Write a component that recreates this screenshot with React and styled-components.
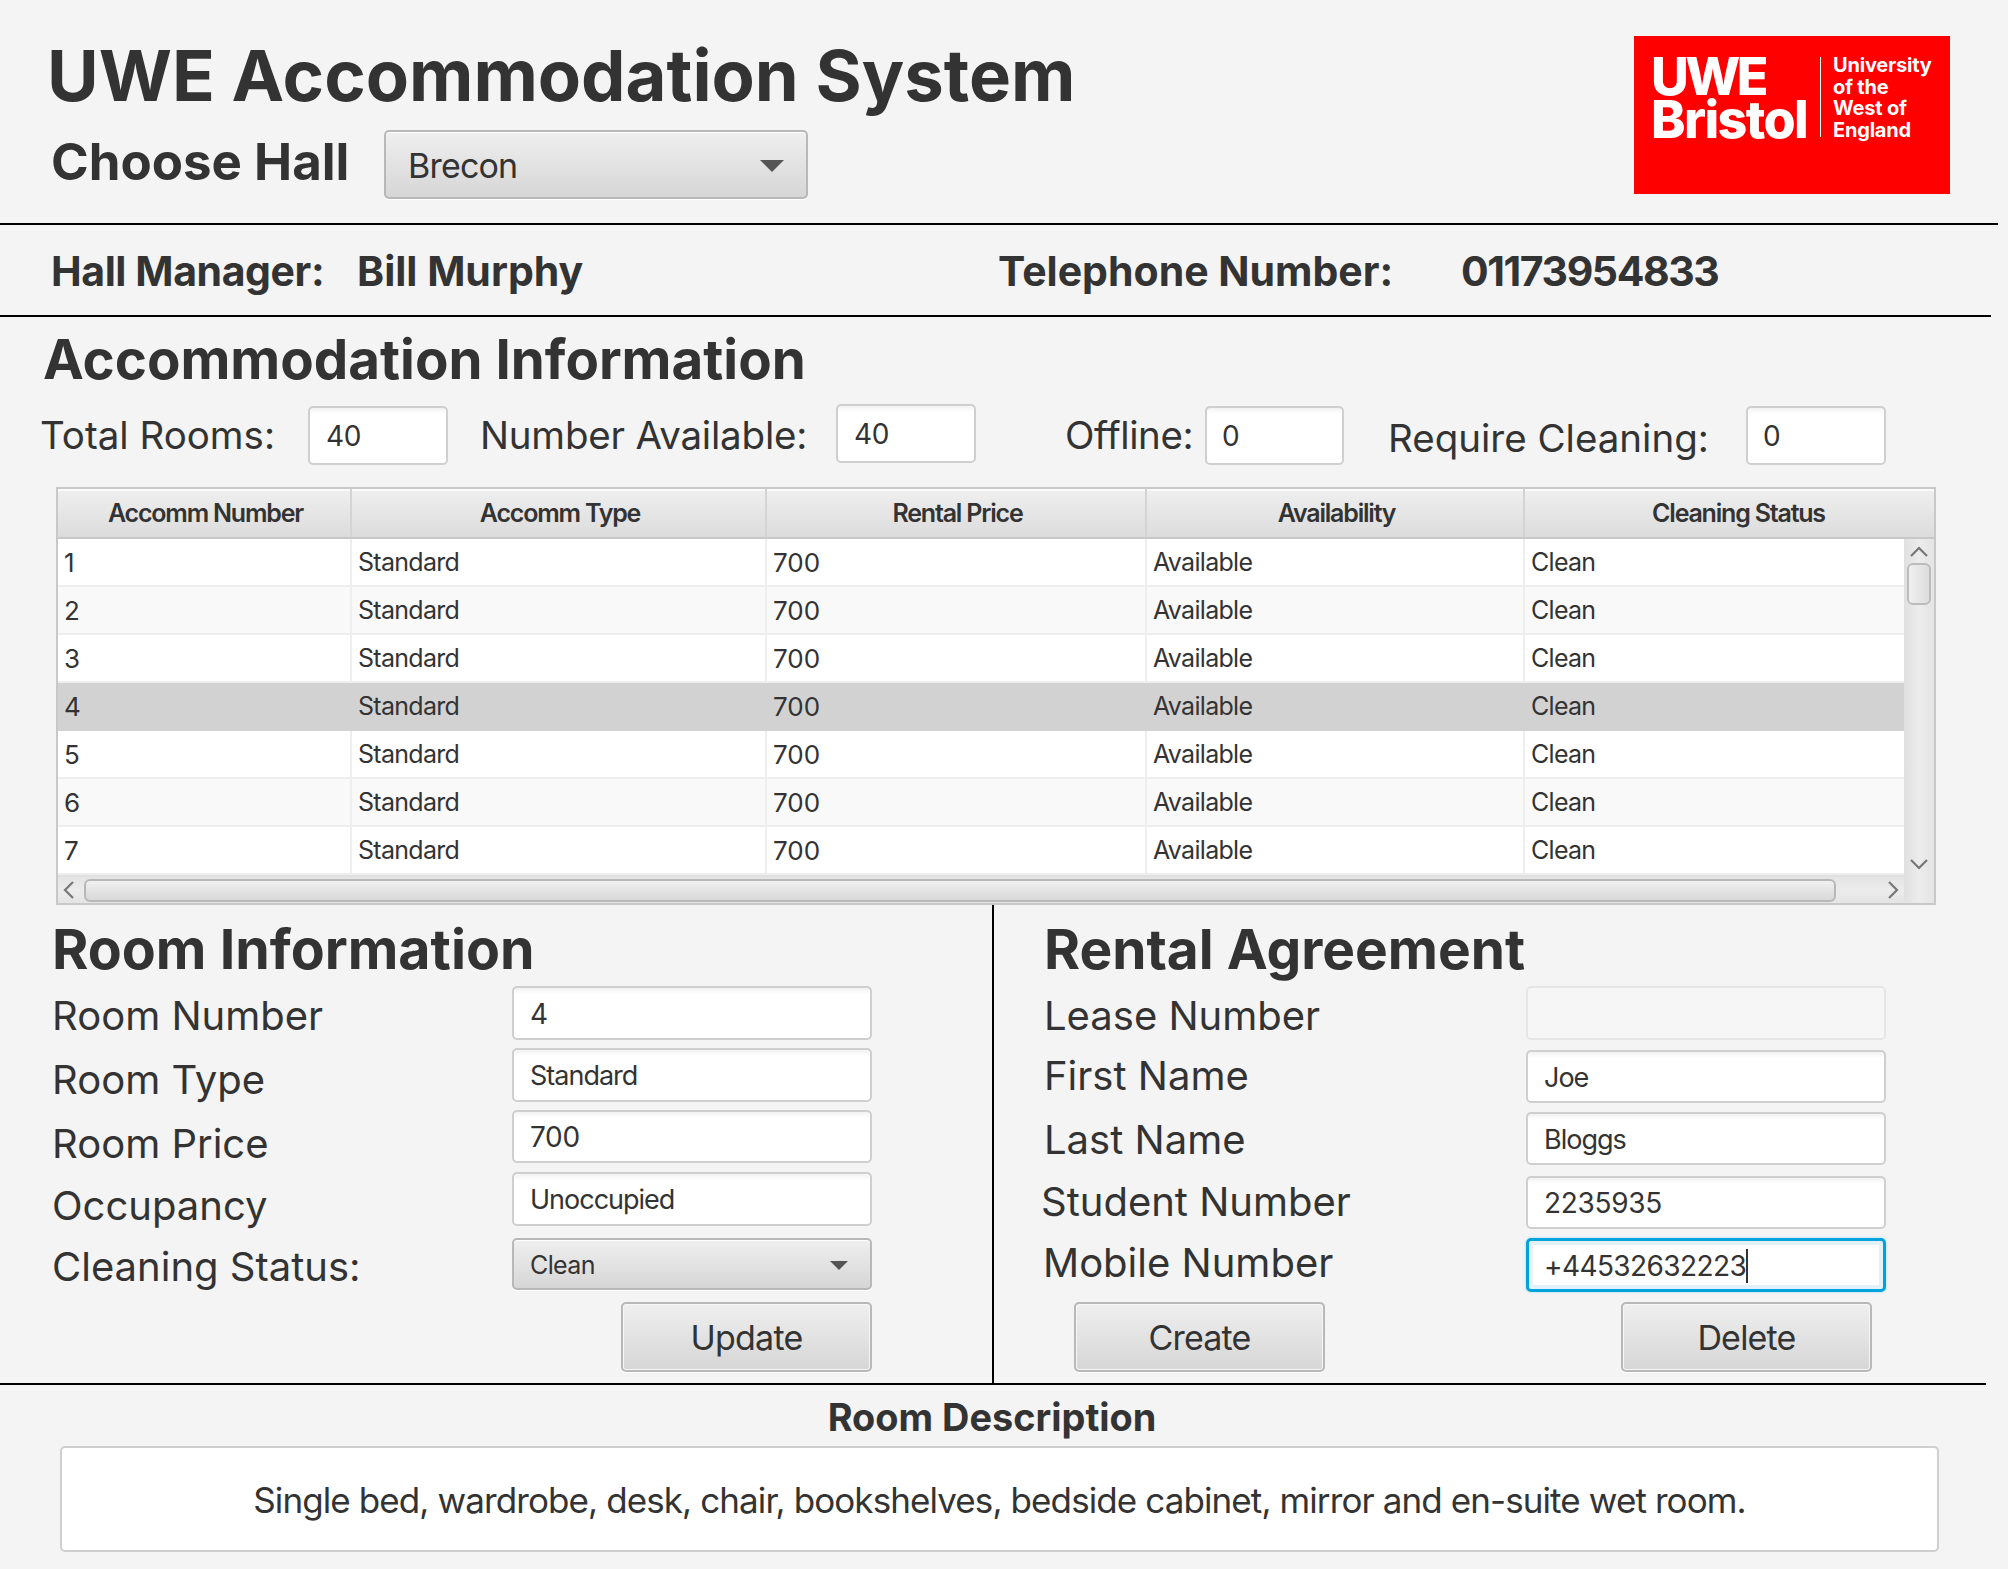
import styled, { createGlobalStyle } from "styled-components";

const GlobalStyle = createGlobalStyle`
  html, body { margin: 0; padding: 0; background: #f4f4f4; }
  * { box-sizing: border-box; }
`;

const Page = styled.div`
  width: 2008px;
  height: 1569px;
  overflow: hidden;
  background: #f4f4f4;
  color: #333;
  font-family: Inter, "Liberation Sans", sans-serif;
`;

const Rule = styled.div`
  width: ${(p) => p.$width}px;
  height: 2px;
  background: #000;
`;

const Header = styled.header`
  height: 223px;
  display: flex;
  justify-content: space-between;
`;

const HeaderLeft = styled.div`
  padding: 36px 0 0 47px;
`;

const Title = styled.h1`
  margin: 0;
  font-size: 70.6px;
  line-height: 80px;
  font-weight: 700;
`;

const ChooseRow = styled.div`
  display: flex;
  align-items: center;
  margin: 14px 0 0 4px;
`;

const ChooseLabel = styled.div`
  width: 333px;
  padding-bottom: 6px;
  font-size: 51px;
  font-weight: 700;
`;

const gradient = "linear-gradient(#efefef, #d6d6d6)";

const Select = styled.div`
  display: flex;
  align-items: center;
  justify-content: space-between;
  width: ${(p) => p.$width}px;
  height: ${(p) => p.$height}px;
  margin-top: ${(p) => p.$top || 0}px;
  padding: 2px 22px 0 ${(p) => p.$pad}px;
  font-size: ${(p) => p.$size}px;
  letter-spacing: ${(p) => p.$spacing}px;
  background: ${gradient};
  border: 2px solid #b8b8b8;
  border-radius: 5px;
  box-shadow: inset 0 1px 0 #fff, 0 1px 0 #fff;
`;

const Logo = styled.div`
  width: 316px;
  height: 158px;
  margin: 36px 58px 0 0;
  padding: 21px 0 0 17px;
  background: #f00;
  color: #fff;
  display: flex;
  align-items: flex-start;
`;

const LogoMark = styled.div`
  width: 169px;
  margin-top: -2px;
  font-size: 52px;
  line-height: 43px;
  font-weight: 800;
  letter-spacing: -1.6px;
`;

const LogoTight = styled.span`
  letter-spacing: -3.6px;
`;

const LogoDivider = styled.div`
  width: 1px;
  height: 80px;
  background: #fff;
  margin-right: 12px;
`;

const LogoText = styled.div`
  font-size: 20px;
  line-height: 21.6px;
  font-weight: 700;
  letter-spacing: -0.2px;
  margin-top: -2px;
`;

const ManagerRow = styled.div`
  height: 90px;
  padding: 2px 0 0 51px;
  display: grid;
  grid-template-columns: 306px 641px 463px auto;
  align-items: center;
  font-size: 41px;
  font-weight: 700;
`;

const ManagerText = styled.div`
  letter-spacing: ${(p) => p.$spacing || 0}px;
`;

const SectionHeading = styled.h2`
  margin: 0;
  font-size: ${(p) => p.$size}px;
  line-height: 60px;
  font-weight: 700;
`;

const AccommSection = styled.section`
  padding: 12px 0 0 43px;
`;

const InfoRow = styled.div`
  display: flex;
  align-items: center;
  height: 59px;
  margin: 17px 0 0 -3px;
  font-size: 38.5px;
`;

const InfoLabel = styled.div`
  width: ${(p) => p.$width}px;
  margin-left: ${(p) => p.$gap || 0}px;
  letter-spacing: ${(p) => p.$spacing || 0}px;
  white-space: nowrap;
  position: relative;
  top: ${(p) => p.$drop || -1}px;
`;

const Field = styled.div`
  display: flex;
  align-items: center;
  flex: none;
  width: ${(p) => p.$width || 360}px;
  height: ${(p) => p.$height || 54}px;
  margin-top: ${(p) => p.$top || 0}px;
  padding: 1px 0 0 ${(p) => p.$pad || 16}px;
  font-size: ${(p) => (p.$words ? 27 : 28)}px;
  letter-spacing: ${(p) => (p.$words ? -1 : -0.3)}px;
  background: ${(p) =>
    p.$disabled ? "#f6f6f6" : "linear-gradient(#f2f2f2, #fff 6px)"};
  border: 2px solid ${(p) => (p.$disabled ? "#e6e6e6" : "#cfcfcf")};
  border-radius: 5px;
`;

const FocusField = styled(Field)`
  background: #fff;
  border: 3px solid #00a3dc;
  padding-left: 15px;
  letter-spacing: -0.6px;
  box-shadow: inset 0 0 0 4px #e2f1fa, 0 0 2px 1px #cfe8f5;
`;

const Caret = styled.span`
  width: 2px;
  height: 34px;
  background: #333;
`;

const TableBox = styled.div`
  width: 1880px;
  height: 418px;
  margin: 22px 0 0 56px;
  border: 2px solid #c8c8c8;
  display: grid;
  grid-template-columns: 1846px 30px;
  grid-template-rows: 50px 336px 28px;
  background: #e6e6e6;
`;

const columns = "294px 415px 380px 378px 1fr";

const TableHead = styled.div`
  grid-column: 1 / 3;
  display: grid;
  grid-template-columns: ${columns};
  background: linear-gradient(#efefef, #dcdcdc);
  box-shadow: inset 0 2px 0 #fafafa;
  border-bottom: 2px solid #c8c8c8;
`;

const HeadCell = styled.div`
  display: flex;
  align-items: center;
  justify-content: center;
  padding-left: 3px;
  font-size: 25px;
  font-weight: 600;
  letter-spacing: -1.2px;
  border-right: 2px solid #d4d4d4;
  &:last-child {
    border-right: none;
    padding-left: 18px;
  }
`;

const TableBody = styled.div`
  background: #fff;
`;

const Row = styled.div`
  display: grid;
  grid-template-columns: ${columns};
  height: 48px;
  background: ${(p) => (p.$selected ? "#d2d2d2" : p.$odd ? "#f9f9f9" : "#fff")};
  border-bottom: 2px solid ${(p) => (p.$selected ? "#d2d2d2" : "#eeeeee")};
`;

const Cell = styled.div`
  display: flex;
  align-items: center;
  padding-left: 6px;
  font-size: ${(p) => (p.$words ? 25 : 26)}px;
  letter-spacing: ${(p) => (p.$words ? -0.7 : 0)}px;
  border-right: 2px solid ${(p) => (p.$selected ? "#d2d2d2" : "#eeeeee")};
  &:last-child { border-right: none; }
`;

const VBar = styled.div`
  display: flex;
  flex-direction: column;
  align-items: center;
  background: linear-gradient(90deg, #e0e0e0, #ececec 50%, #e4e4e4);
  padding-top: 7px;
`;

const VThumb = styled.div`
  width: 24px;
  height: 42px;
  margin-top: 6px;
  border: 2px solid #bcbcbc;
  border-radius: 6px;
  background: linear-gradient(90deg, #f0f0f0, #dcdcdc);
`;

const VEnd = styled.div`
  margin-top: auto;
  padding-bottom: 5px;
  line-height: 0;
`;

const HBar = styled.div`
  display: flex;
  align-items: center;
  padding: 0 5px 0 5px;
  background: linear-gradient(#e4e4e4, #ececec 50%, #e4e4e4);
  border-top: 2px solid #e0e0e0;
`;

const HThumb = styled.div`
  width: 1752px;
  height: 23px;
  margin: 0 auto 0 10px;
  border: 2px solid #b8b8b8;
  border-radius: 6px;
  background: linear-gradient(#f0f0f0, #d8d8d8);
`;

const Panels = styled.div`
  display: flex;
  height: 478px;
`;

const Panel = styled.section`
  width: ${(p) => p.$width}px;
  padding: 14px 0 0 ${(p) => p.$left}px;
  border-right: ${(p) => (p.$divider ? "2px solid #000" : "none")};
`;

const FormGrid = styled.div`
  display: grid;
  grid-template-columns: ${(p) => p.$labels}px 360px;
  height: 307px;
  margin-top: 7px;
`;

const Column = styled.div`
  display: flex;
  flex-direction: column;
`;

const FormLabel = styled.div`
  height: 50px;
  line-height: 50px;
  font-size: 40px;
  white-space: nowrap;
  margin-top: ${(p) => p.$top}px;
  margin-left: ${(p) => p.$shift || 0}px;
`;

const ButtonRow = styled.div`
  display: flex;
  gap: ${(p) => p.$gap || 0}px;
  padding-left: ${(p) => p.$left}px;
  margin-top: 9px;
`;

const Button = styled.div`
  display: flex;
  align-items: center;
  justify-content: center;
  width: 251px;
  height: 70px;
  font-size: 34px;
  letter-spacing: -0.8px;
  background: ${gradient};
  border: 2px solid #b8b8b8;
  border-radius: 5px;
  box-shadow: inset 0 0 0 1px #f6f6f6, 0 1px 0 #fff;
`;

const DescriptionHeading = styled.div`
  margin-top: 9px;
  text-align: center;
  width: 1984px;
  font-size: 37.9px;
  line-height: 46px;
  font-weight: 700;
`;

const DescriptionBox = styled.div`
  display: flex;
  align-items: center;
  justify-content: center;
  width: 1879px;
  height: 106px;
  margin: 6px 0 0 60px;
  padding-top: 2px;
  font-size: 35px;
  letter-spacing: -0.9px;
  background: #fff;
  border: 2px solid #cfcfcf;
  border-radius: 5px;
`;

const Triangle = ({ w, h }) => (
  <svg width={w} height={h} viewBox="0 0 24 12">
    <path d="M0 0H24L12 12Z" fill="#555" />
  </svg>
);

const Chevron = ({ d, w, h }) => (
  <svg width={w} height={h} viewBox={`0 0 ${w} ${h}`} fill="none" stroke="#777" strokeWidth="2.2">
    <path d={d} />
  </svg>
);

const headers = ["Accomm Number", "Accomm Type", "Rental Price", "Availability", "Cleaning Status"];
const rows = [1, 2, 3, 4, 5, 6, 7];

export default function App() {
  return (
    <Page>
      <GlobalStyle />
      <Header>
        <HeaderLeft>
          <Title>UWE Accommodation System</Title>
          <ChooseRow>
            <ChooseLabel>Choose Hall</ChooseLabel>
            <Select $width={424} $height={69} $size={34} $spacing={-0.8} $pad={22}>
              Brecon
              <Triangle w={24} h={12} />
            </Select>
          </ChooseRow>
        </HeaderLeft>
        <Logo>
          <LogoMark><LogoTight>UWE</LogoTight><br />Bristol</LogoMark>
          <LogoDivider />
          <LogoText>University<br />of the<br />West of<br />England</LogoText>
        </Logo>
      </Header>
      <Rule $width={1998} />
      <ManagerRow>
        <ManagerText $spacing={-0.4}>Hall Manager:</ManagerText>
        <ManagerText>Bill Murphy</ManagerText>
        <ManagerText>Telephone Number:</ManagerText>
        <ManagerText $spacing={-1.4}>01173954833</ManagerText>
      </ManagerRow>
      <Rule $width={1991} />
      <AccommSection>
        <SectionHeading $size={54.7}>Accommodation Information</SectionHeading>
        <InfoRow>
          <InfoLabel $width={268}>Total Rooms:</InfoLabel>
          <Field $width={140} $height={59}>40</Field>
          <InfoLabel $width={356} $gap={32} $spacing={-0.2}>Number Available:</InfoLabel>
          <Field $width={140} $height={59} $top={-4}>40</Field>
          <InfoLabel $width={140} $gap={89} $spacing={-0.4}>Offline:</InfoLabel>
          <Field $width={139} $height={59} $pad={15}>0</Field>
          <InfoLabel $width={358} $gap={44} $drop={2}>Require Cleaning:</InfoLabel>
          <Field $width={140} $height={59} $pad={15}>0</Field>
        </InfoRow>
      </AccommSection>
      <TableBox>
        <TableHead>
          {headers.map((h) => (
            <HeadCell key={h}>{h}</HeadCell>
          ))}
        </TableHead>
        <TableBody>
          {rows.map((n) => {
            const selected = n === 4;
            return (
              <Row key={n} $selected={selected} $odd={n % 2 === 0}>
                <Cell $selected={selected}>{n}</Cell>
                <Cell $selected={selected} $words>Standard</Cell>
                <Cell $selected={selected}>700</Cell>
                <Cell $selected={selected} $words>Available</Cell>
                <Cell $selected={selected} $words>Clean</Cell>
              </Row>
            );
          })}
        </TableBody>
        <VBar>
          <Chevron w={20} h={11} d="M2 10L10 2L18 10" />
          <VThumb />
          <VEnd>
            <Chevron w={20} h={11} d="M2 1L10 9L18 1" />
          </VEnd>
        </VBar>
        <HBar>
          <Chevron w={11} h={20} d="M10 2L2 10L10 18" />
          <HThumb />
          <Chevron w={11} h={20} d="M1 2L9 10L1 18" />
        </HBar>
        <VBar />
      </TableBox>
      <Panels>
        <Panel $width={994} $left={52} $divider>
          <SectionHeading $size={55.5}>Room Information</SectionHeading>
          <FormGrid $labels={460}>
            <Column>
              <FormLabel $top={5}>Room Number</FormLabel>
              <FormLabel $top={14}>Room Type</FormLabel>
              <FormLabel $top={14}>Room Price</FormLabel>
              <FormLabel $top={12}>Occupancy</FormLabel>
              <FormLabel $top={11}>Cleaning Status:</FormLabel>
            </Column>
            <Column>
              <Field>4</Field>
              <Field $top={8} $words>Standard</Field>
              <Field $top={8} $height={53}>700</Field>
              <Field $top={9} $words>Unoccupied</Field>
              <Select $width={360} $height={52} $size={25} $spacing={-0.6} $pad={16} $top={12}>
                Clean
                <Triangle w={18} h={9} />
              </Select>
            </Column>
          </FormGrid>
          <ButtonRow $left={569}>
            <Button>Update</Button>
          </ButtonRow>
        </Panel>
        <Panel $width={992} $left={50}>
          <SectionHeading $size={55}>Rental Agreement</SectionHeading>
          <FormGrid $labels={482}>
            <Column>
              <FormLabel $top={5}>Lease Number</FormLabel>
              <FormLabel $top={10}>First Name</FormLabel>
              <FormLabel $top={14}>Last Name</FormLabel>
              <FormLabel $top={12} $shift={-3}>Student Number</FormLabel>
              <FormLabel $top={11} $shift={-1}>Mobile Number</FormLabel>
            </Column>
            <Column>
              <Field $disabled />
              <Field $top={10} $height={53} $words>Joe</Field>
              <Field $top={9} $height={53} $words>Bloggs</Field>
              <Field $top={11} $height={53}>2235935</Field>
              <FocusField $top={9}>
                +44532632223
                <Caret />
              </FocusField>
            </Column>
          </FormGrid>
          <ButtonRow $left={30} $gap={296}>
            <Button>Create</Button>
            <Button>Delete</Button>
          </ButtonRow>
        </Panel>
      </Panels>
      <Rule $width={1986} />
      <DescriptionHeading>Room Description</DescriptionHeading>
      <DescriptionBox>
        Single bed, wardrobe, desk, chair, bookshelves, bedside cabinet, mirror and en-suite wet room.
      </DescriptionBox>
    </Page>
  );
}
